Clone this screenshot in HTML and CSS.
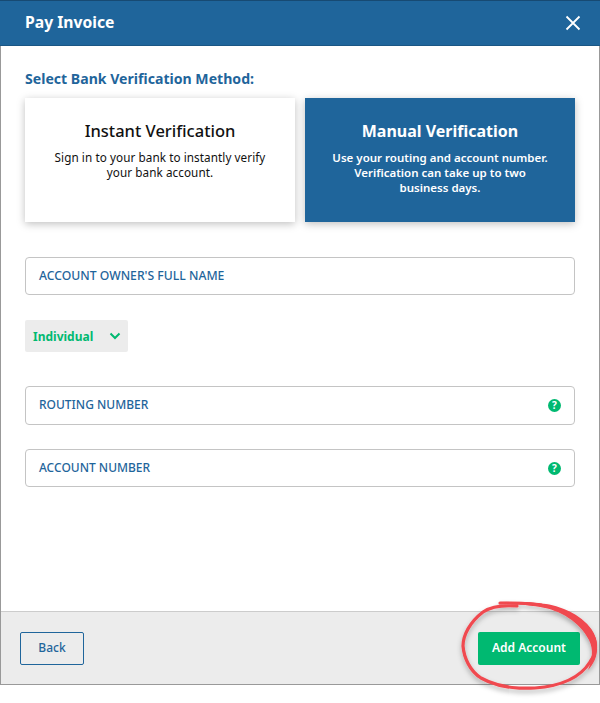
FILE: index.html
```html
<!DOCTYPE html>
<html lang="en">
<head>
  <meta charset="UTF-8">
  <meta name="viewport" content="width=device-width, initial-scale=1">
  <title>Pay Invoice</title>
  <link rel="stylesheet" href="styles.css">
</head>
<body>
  <div class="modal">
    <header class="modal-header">
      <h1>Pay Invoice</h1>
      <button class="close-btn" aria-label="Close">
        <svg width="16" height="16" viewBox="0 0 16 16"><path d="M1.500 1.500l13 13M14.500 1.500l-13 13" stroke="#fff" stroke-width="1.800" fill="none"/></svg>
      </button>
    </header>
    <main class="modal-body">
      <h2>Select Bank Verification Method:</h2>
      <div class="methods">
        <div class="method">
          <h3>Instant Verification</h3>
          <p>Sign in to your bank to instantly verify<br>your bank account.</p>
        </div>
        <div class="method selected">
          <h3>Manual Verification</h3>
          <p>Use your routing and account number.<br>Verification can take up to two<br>business days.</p>
        </div>
      </div>
      <div class="field name-field">ACCOUNT OWNER'S FULL NAME</div>
      <div class="select">
        <span>Individual</span>
        <svg width="12" height="8" viewBox="0 0 12 8"><path d="M1.500 1.500L6 6l4.500-4.500" stroke="#00b971" stroke-width="2" fill="none"/></svg>
      </div>
      <div class="field routing-field">
        <span>ROUTING NUMBER</span>
        <span class="help">?</span>
      </div>
      <div class="field account-field">
        <span>ACCOUNT NUMBER</span>
        <span class="help">?</span>
      </div>
    </main>
    <footer class="modal-footer">
      <button class="btn-back">Back</button>
      <button class="btn-add">Add Account</button>
    </footer>
  </div>
  <!-- Red hand-drawn ring around the button -->
  <svg class="scribble" width="150" height="113" viewBox="0 0 150 113">
    <defs>
      <filter id="ring-shadow" x="-20%" y="-20%" width="140%" height="140%">
        <feDropShadow dx="0" dy="3" stdDeviation="2.500" flood-color="#000" flood-opacity="0.3"/>
      </filter>
    </defs>
    <g filter="url(#ring-shadow)">
      <path class="ring" d="M50 13C62 13 80 13 92 15C110 17 130 26 140 40C148 52 147 62 140 72C130 88 112 96 85 98C65 99 45 96 31 88C20 81 14 68 13 56C13 45 20 32 33 22C42 16 55 15 67 16"/>
      <path class="ring-thick" d="M50 12C70 11 95 12 112 19C130 26 147 40 147 56C148 66 143 75 138 80C142 70 144 60 139 50C130 32 110 20 90 17C78 15 62 14 50 12Z"/>
    </g>
  </svg>
</body>
</html>
```

FILE: styles.css
```css
* {
  box-sizing: border-box;
}
body {
  margin: 0;
  font-family: "Noto Sans", Arial, sans-serif;
  background: white;
  position: relative;
  height: 703px;
  overflow: hidden;
}
.modal {
  width: 600px;
  height: 685px;
  display: flex;
  flex-direction: column;
  border: 1px solid #999;
  border-top: none;
  background: white;
}
.modal-header {
  height: 46px;
  flex-shrink: 0;
  margin: 0 -1px;
  padding: 0 19px 2px 25px;
  display: flex;
  align-items: center;
  justify-content: space-between;
  background: #1f659b;
  border-top: 1px solid #174a73;
  border-bottom: 1px solid #1a5684;
}
.modal-header h1 {
  margin: 0;
  font-size: 15.700px;
  font-weight: 700;
  color: white;
}
.close-btn {
  padding: 0;
  border: none;
  background: none;
  display: flex;
  margin-top: 2px;
}
.modal-body {
  flex: 1;
  padding: 23px 24px 0;
}
.modal-body h2 {
  margin: 0 0 9px;
  font-size: 14.100px;
  line-height: 20px;
  font-weight: 700;
  color: #1f659b;
}
.methods {
  display: flex;
  gap: 10px;
  margin-bottom: 35px;
}
.method {
  flex: 1;
  height: 124px;
  padding: 22px 0 0;
  text-align: center;
  background: white;
  color: #111;
  box-shadow: 0 2px 8px rgba(0,0,0,0.25);
}
.method h3 {
  margin: 0 0 8px;
  font-size: 16.500px;
  line-height: 22px;
  font-weight: 500;
}
.method p {
  margin: 0;
  font-size: 11.700px;
  letter-spacing: 0.08px;
  line-height: 15px;
}
.method.selected {
  background: #1f659b;
  color: white;
}
.method.selected h3 {
  font-size: 16px;
  font-weight: 700;
}
.method.selected p {
  font-size: 11.500px;
  letter-spacing: 0;
  font-weight: 600;
}
.field {
  height: 38px;
  padding: 0 13px 2px;
  display: flex;
  align-items: center;
  justify-content: space-between;
  border: 1px solid #c4c4c4;
  border-radius: 4px;
  font-size: 12px;
  font-weight: 500;
  color: #1f659b;
}
.name-field {
  font-size: 12.200px;
}
.select {
  width: 103px;
  height: 32px;
  margin: 25px 0 34px;
  padding: 0 7px 0 8px;
  display: flex;
  align-items: center;
  justify-content: space-between;
  background: #ececec;
  border-radius: 2px;
  font-size: 12px;
  font-weight: 700;
  color: #00b971;
}
.routing-field {
  height: 39px;
  margin-bottom: 24px;
}
.help {
  width: 13px;
  height: 13px;
  margin-top: 2px;
  border-radius: 50%;
  background: #00b971;
  color: white;
  font-size: 10px;
  font-weight: 700;
  line-height: 13px;
  text-align: center;
}
.modal-footer {
  height: 73px;
  flex-shrink: 0;
  padding: 0 19px;
  display: flex;
  align-items: center;
  justify-content: space-between;
  background: #ececec;
  border-top: 1px solid #ccc;
}
.btn-back,
.btn-add {
  height: 33px;
  padding: 0 0 2px;
  border-radius: 2px;
  font-family: inherit;
  font-size: 12px;
  font-weight: 500;
}
.btn-back {
  width: 64px;
  background: none;
  border: 1px solid #1f659b;
  color: #1f659b;
}
.btn-add {
  width: 102px;
  background: #00b971;
  border: none;
  color: white;
  font-weight: 600;
}
.scribble {
  position: absolute;
  left: 450px;
  top: 590px;
}
.ring {
  fill: none;
  stroke: #f0484f;
  stroke-width: 3.200;
  stroke-linecap: round;
}
.ring-thick {
  fill: #f0484f;
}
```
